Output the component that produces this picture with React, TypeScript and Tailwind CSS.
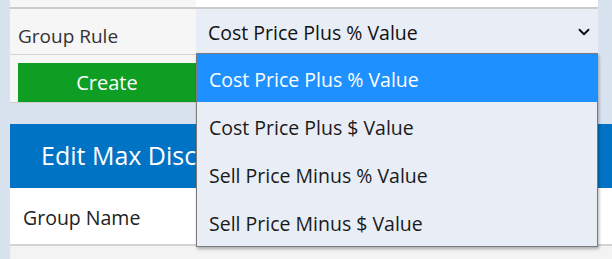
import { ChevronDown } from "lucide-react";

const options = [
    "Cost Price Plus % Value",
    "Cost Price Plus $ Value",
    "Sell Price Minus % Value",
    "Sell Price Minus $ Value",
];

function App() {
    const font = { fontFamily: '"Open Sans", "Liberation Sans", sans-serif' };

    return (
        <div className="w-[612px] h-[259px] overflow-hidden bg-[#d9e2ef] pl-[10px]" style={font}>
            <div className="w-[588px]">
                {/* top row cut off */}
                <div className="flex h-[9px] border-b-2 border-[#cbcbcb]">
                    <div className="w-[186px] bg-[#f6f6f6]" />
                    <div className="flex-1 bg-white" />
                </div>

                {/* group rule row */}
                <div className="flex h-[46px] border-b border-[#d4d4d4]">
                    <div className="w-[186px] bg-[#f6f6f6] flex items-center pl-[8px] pt-[9px] text-[19px] text-[#333]">
                        Group Rule
                    </div>
                    <div className="relative flex-1 bg-[#e8edf6] flex items-center justify-between pl-[12px] pr-[5px] text-[19.5px] text-[#111]">
                        <span className="pt-[2px]">Cost Price Plus % Value</span>
                        <ChevronDown size={18} strokeWidth={2.6} className="text-[#111]" />

                        <div className="absolute left-0 right-0 top-[44px] z-10 border border-[#7a7a7a] bg-[#e8edf6] shadow-[1px_2px_3px_rgba(0,0,0,0.3)]">
                            {options.map((o, i) => (
                                <div
                                    key={o}
                                    className={
                                        i === 0
                                            ? "h-[48px] flex items-center pl-[12px] pt-[4px] bg-[#1e90ff] text-white text-[19.5px]"
                                            : "h-[48px] flex items-center pl-[12px] pt-[4px] text-[#1a1a1a] text-[19.5px]"
                                    }
                                >
                                    {o}
                                </div>
                            ))}
                        </div>
                    </div>
                </div>

                {/* create row */}
                <div className="h-[48px] bg-[#f6f6f6] border-b border-[#cfcfcf] pl-[8px] pt-[8px]">
                    <button className="w-[178px] h-[39px] bg-[#0e9e24] text-white text-[20px] flex items-center justify-center">
                        Create
                    </button>
                </div>
            </div>

            <div className="h-[21px]" />

            {/* edit header */}
            <div className="h-[64px] bg-[#0073c5] flex items-center pl-[31px] text-white text-[25px]">
                Edit Max Discount Group
            </div>

            <div className="flex h-[58px] bg-white border-b-2 border-[#d3d3d3]">
                <div className="w-[478px] border-r border-[#ececec] flex items-center pl-[13px] pt-[3px] text-[19.5px] text-[#222]">
                    Group Name
                </div>
                <div className="flex-1" />
            </div>
            <div className="h-[20px] bg-[#f3f3f3]" />
        </div>
    );
}

export default App;
